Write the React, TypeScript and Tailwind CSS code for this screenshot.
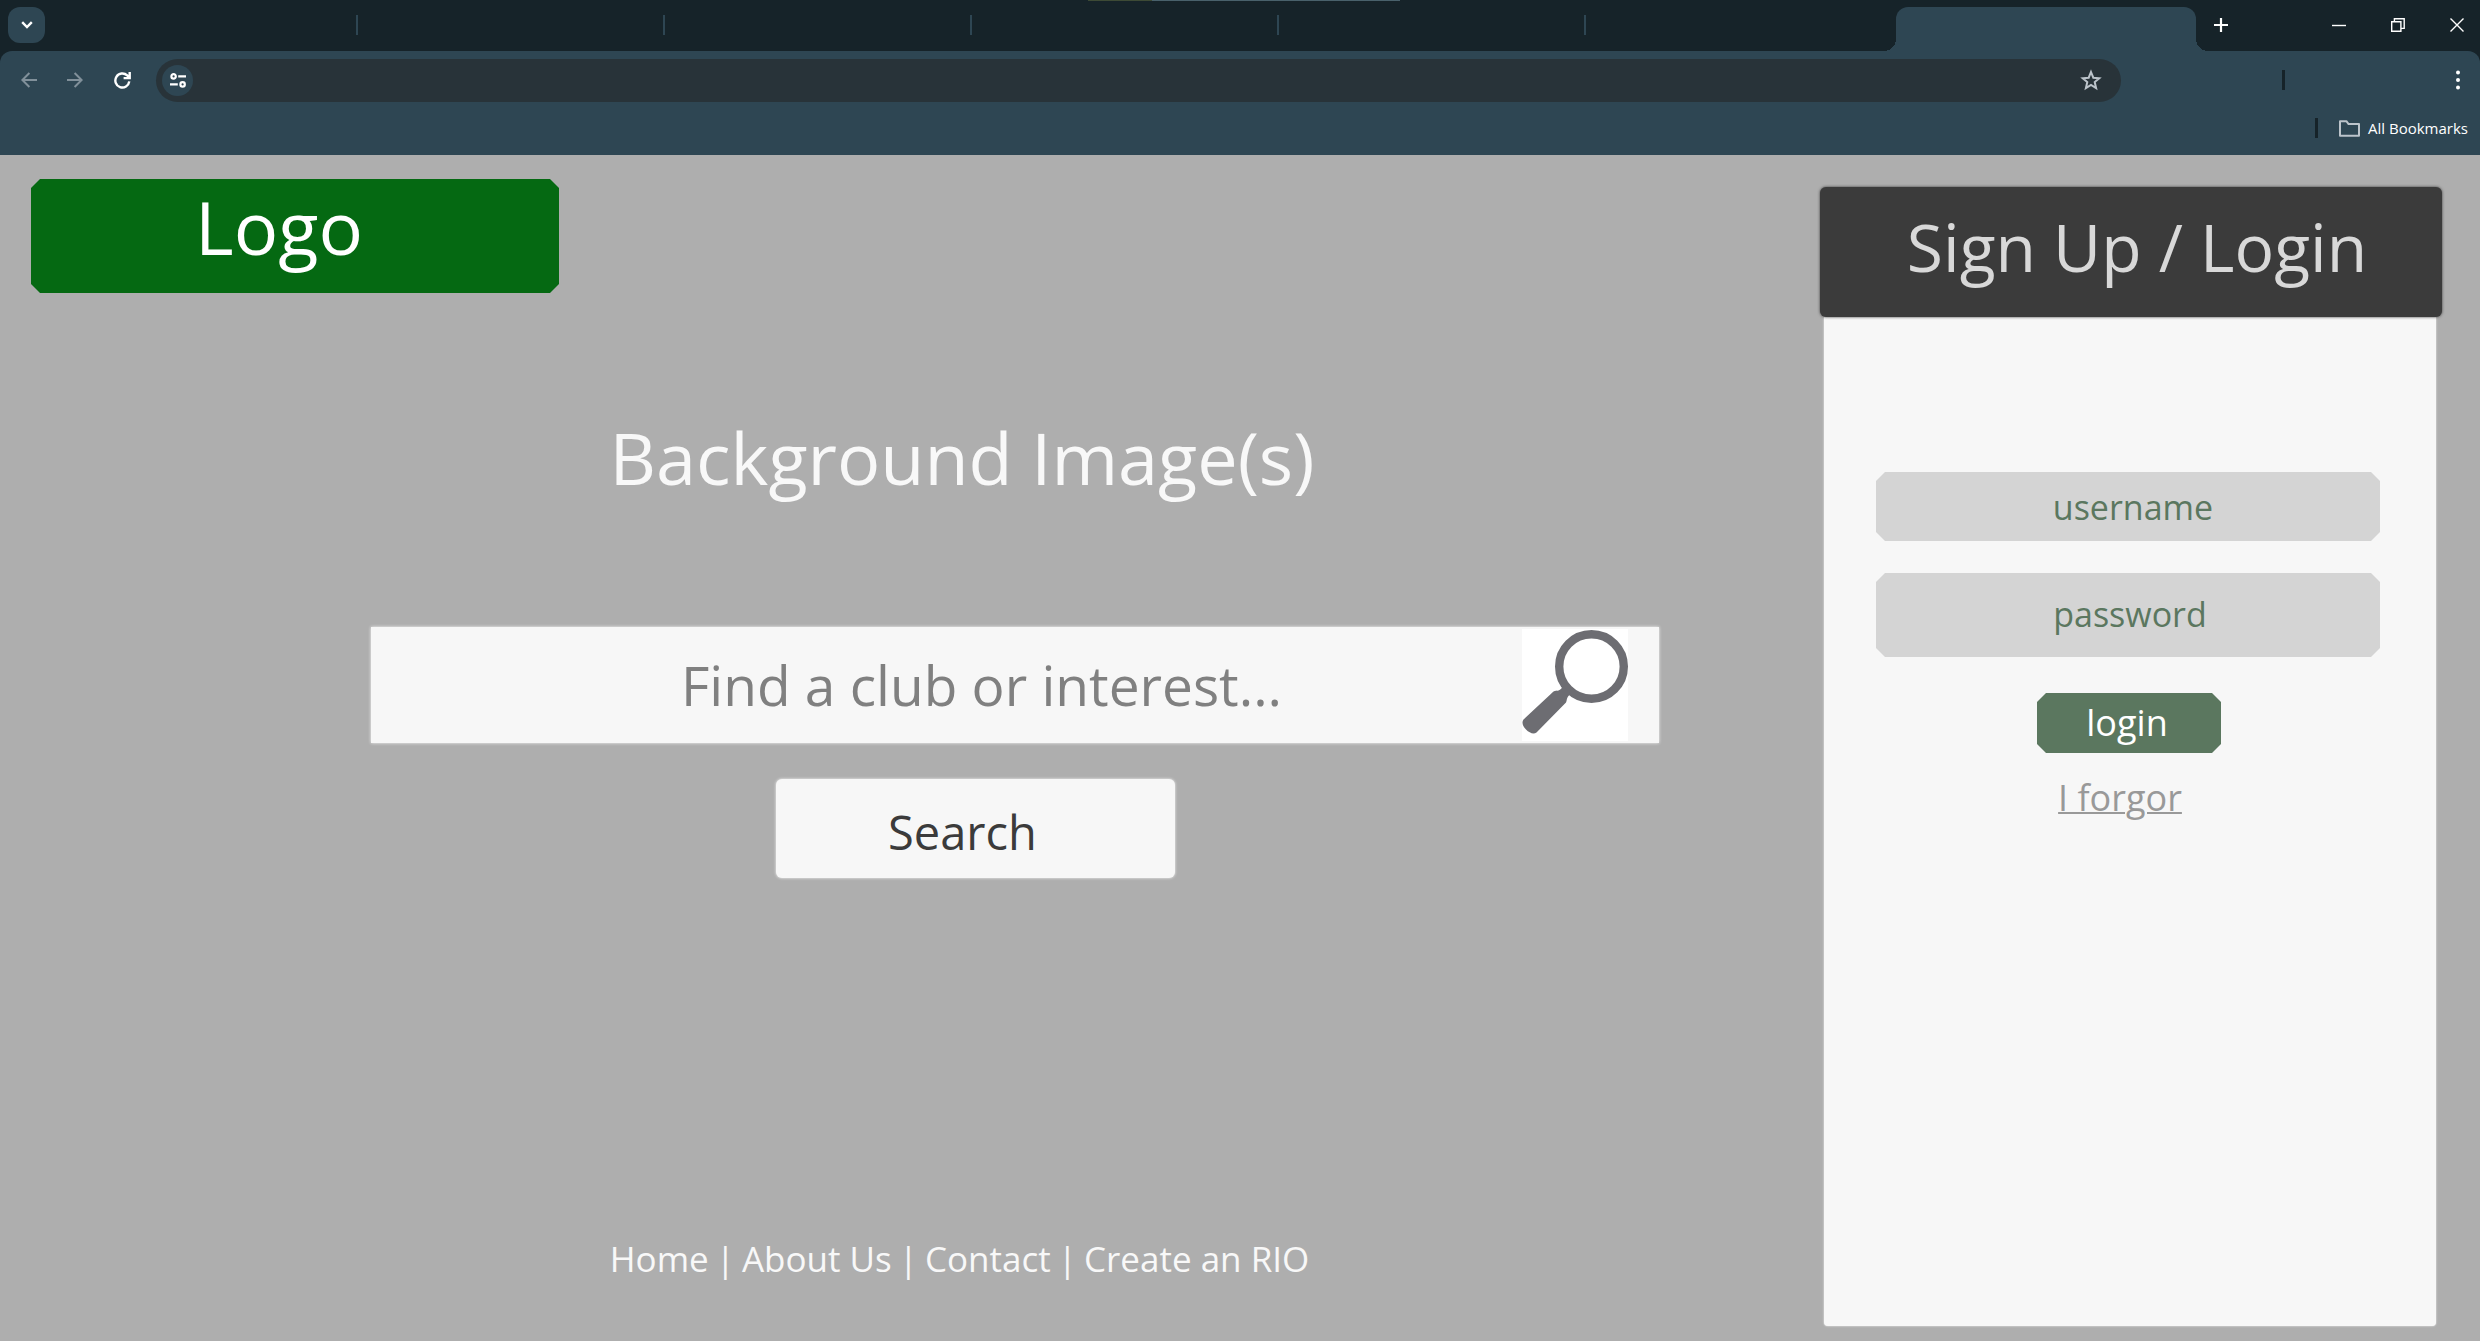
import type { ReactNode } from "react";

const chamfer =
  "[clip-path:polygon(9px_0,calc(100%-9px)_0,100%_9px,100%_calc(100%-9px),calc(100%-9px)_100%,9px_100%,0_calc(100%-9px),0_9px)]";

function IconButton({ label, className, children }: { label: string; className: string; children: ReactNode }) {
  return (
    <button type="button" aria-label={label} className={`flex shrink-0 items-center justify-center ${className}`}>
      {children}
    </button>
  );
}

function TabStrip() {
  return (
    <div className="relative flex h-[51px] items-stretch bg-[#162329]">
      <div className="absolute left-[1088px] top-0 flex h-px w-[312px] bg-[#49616b]">
        <div className="w-16 bg-[#3d4a35]" />
      </div>
      <div className="flex w-[51px] shrink-0 items-center pb-px pl-2">
        <IconButton label="Search tabs" className="h-9 w-[37px] rounded-xl bg-[#2e4653] text-white">
          <svg width="12" height="8" viewBox="0 0 12 8" fill="none" stroke="currentColor" strokeWidth="2.4">
            <path d="M1.2 1.2 6 6 10.8 1.2" />
          </svg>
        </IconButton>
      </div>
      <div className="flex w-[1845px] shrink items-center pb-px">
        {["one", "two", "three", "four", "five"].map((tab) => (
          <div key={tab} className="flex h-5 w-[307px] shrink justify-end border-r-2 border-[#2e4653]" />
        ))}
      </div>
      <div className="relative mt-[7px] w-[300px] shrink rounded-t-xl bg-[#2e4653]">
        <div className="absolute bottom-0 right-full h-3 w-3 bg-[radial-gradient(circle_at_0_0,#162329_12px,#2e4653_12px)]" />
        <div className="absolute bottom-0 left-full h-3 w-3 bg-[radial-gradient(circle_at_100%_0,#162329_12px,#2e4653_12px)]" />
      </div>
      <div className="flex grow items-center justify-between pb-px pl-[11px] text-white">
        <IconButton label="New tab" className="h-9 w-[28px]">
          <svg width="14" height="14" viewBox="0 0 14 14" stroke="currentColor" strokeWidth="2.2">
            <path d="M7 0v14M0 7h14" />
          </svg>
        </IconButton>
        <div className="flex gap-[13px]">
          <IconButton label="Minimize" className="h-9 w-[46px]">
            <svg width="14" height="14" viewBox="0 0 14 14" stroke="currentColor" strokeWidth="1.4">
              <path d="M0 7.5h14" />
            </svg>
          </IconButton>
          <IconButton label="Restore" className="h-9 w-[46px]">
            <svg width="14" height="14" viewBox="0 0 14 14" fill="none" stroke="currentColor" strokeWidth="1.4">
              <path d="M.7 3.700h9.200v9.600H.7zM3.400 3.700V.8h9.800v9.600H9.900" />
            </svg>
          </IconButton>
          <IconButton label="Close" className="h-9 w-[46px]">
            <svg width="14" height="14" viewBox="0 0 14 14" stroke="currentColor" strokeWidth="1.4">
              <path d="M.5.5l13 13M13.5.5l-13 13" />
            </svg>
          </IconButton>
        </div>
      </div>
    </div>
  );
}

function Toolbar() {
  return (
    <div className="flex h-[59px] items-center pb-px">
      <div className="flex w-[156px] shrink-0 items-center pl-[6px]">
        <IconButton label="Back" className="h-9 w-[46px] text-[#81909a]">
          <svg width="16" height="16" viewBox="0 0 16 16" fill="none" stroke="currentColor" strokeWidth="2">
            <path d="M16 8H1.6M8.4 1 1.4 8l7 7" />
          </svg>
        </IconButton>
        <IconButton label="Forward" className="h-9 w-[46px] text-[#81909a]">
          <svg width="16" height="16" viewBox="0 0 16 16" fill="none" stroke="currentColor" strokeWidth="2">
            <path d="M0 8h14.4M7.6 1l7 7-7 7" />
          </svg>
        </IconButton>
        <IconButton label="Reload" className="h-9 w-[48px] text-white">
          <svg width="17" height="17" viewBox="0 0 17 17" fill="none" stroke="currentColor" strokeWidth="2.4">
            <path d="M15.3 9.400A7 7 0 1 1 13.200 3.400l1.900 1.900M15.700 0v6.100H9.600" />
          </svg>
        </IconButton>
      </div>
      <div className="flex h-[43px] w-[1965px] shrink items-center rounded-full bg-[#283339] pl-[6px] pr-[18px]">
        <IconButton label="Site information" className="h-[31px] w-[31px] rounded-full bg-[#2e4653] text-white">
          <svg width="16" height="15" viewBox="0 0 16 15" fill="none" stroke="currentColor" strokeWidth="2.2">
            <circle cx="3.6" cy="3.4" r="2.2" />
            <path d="M8.2 3.4H16M0 11.4h7.8" />
            <circle cx="12.6" cy="11.4" r="2.2" />
          </svg>
        </IconButton>
        <input aria-label="Address" className="h-full min-w-0 grow bg-transparent px-3 text-base text-white outline-none" />
        <IconButton label="Bookmark this tab" className="h-6 w-6 text-[#bcc4cb]">
          <svg width="22" height="22" viewBox="0 0 22 22" fill="none" stroke="currentColor" strokeWidth="2">
            <path d="M11 3l2.300 5.700 6 .5-4.600 3.900 1.400 6L11 15.900l-5.100 3.200 1.400-6L2.700 9.200l6-.5z" />
          </svg>
        </IconButton>
      </div>
      <div className="flex grow items-center justify-between pl-[161px]">
        <div className="h-5 w-[3px] bg-[#162329]" />
        <IconButton label="Menu" className="h-9 w-[44px] text-white">
          <svg width="4" height="20" viewBox="0 0 4 20" fill="currentColor">
            <circle cx="2" cy="2.6" r="2" />
            <circle cx="2" cy="10" r="2" />
            <circle cx="2" cy="17.4" r="2" />
          </svg>
        </IconButton>
      </div>
    </div>
  );
}

function BookmarksBar() {
  return (
    <div className="flex h-[45px] items-start justify-end pr-3 pt-[6px]">
      <div className="flex h-6 items-center">
        <div className="mr-[21px] h-5 w-[3px] bg-[#162329]" />
        <button type="button" className="flex items-center gap-2 text-[15px] leading-6 text-white">
          <svg width="21" height="17" viewBox="0 0 21 17" fill="none" stroke="#bcc4cb" strokeWidth="2" strokeLinejoin="round">
            <path d="M1 15.800V1.200h6.400l2.200 2.900H20v11.700z" />
          </svg>
          All Bookmarks
        </button>
      </div>
    </div>
  );
}

function MagnifierIcon() {
  return (
    <svg width="106" height="106" viewBox="0 0 106 106" aria-hidden="true">
      <circle cx="69.500" cy="37.500" r="32.300" fill="none" stroke="#6d6d72" strokeWidth="8.400" />
      <path
        fill="#6d6d72"
        d="M41 57l8.500 8.500c-2 0-3.500 1.500-4 3-1 1.500-.5 3-1.500 5L14.500 103.500c-3 2-7 .5-10.500-3-3.500-3.500-4.500-7.500-2.500-10L31.500 62.500c1.500-1 3.500-.5 5-1 2-.5 3.500-2.500 4.500-4.500z"
      />
    </svg>
  );
}

function Hero() {
  return (
    <section className="flex min-w-0 grow flex-col pt-6">
      <a
        href="#home"
        className={`ml-[31px] flex h-[114px] w-[528px] items-center justify-center bg-[#056912] pb-[18px] pr-8 text-[74px] leading-none text-white ${chamfer}`}
      >
        Logo
      </a>
      <h1 className="mt-28 pl-[104px] text-center text-[72px] leading-[104px] text-[#f8f8f8]">Background Image(s)</h1>
      <form className="flex flex-col" onSubmit={(event) => event.preventDefault()}>
        <div className="ml-[371px] mr-[161px] mt-[118px] flex h-[116px] items-center bg-[#f7f7f7] pr-[31px] shadow-[0_0_3px_#f7f7f7]">
          <input
            aria-label="Find a club or interest"
            placeholder="Find a club or interest..."
            className="h-full min-w-0 grow bg-transparent pb-[2px] pl-[70px] text-center text-[55px] text-[#808080] outline-none placeholder:text-[#808080]"
          />
          <div className="flex h-[112px] shrink-0 items-start bg-white">
            <MagnifierIcon />
          </div>
        </div>
        <div className="mt-9 flex justify-center pl-[131px]">
          <button
            type="submit"
            className="h-[99px] w-[399px] rounded-md bg-[#f7f7f7] pr-[26px] pt-2 text-[47px] leading-none text-[#3b3b3b] shadow-[0_0_3px_#f7f7f7]"
          >
            Search
          </button>
        </div>
      </form>
      <nav className="mb-[57px] mt-auto flex justify-center gap-[7px] pl-[99px] text-[35px] leading-[50px] text-[#f8f8f8]">
        <a href="#home">Home</a>
        <span>|</span>
        <a href="#about">About Us</a>
        <span>|</span>
        <a href="#contact">Contact</a>
        <span>|</span>
        <a href="#create">Create an RIO</a>
      </nav>
    </section>
  );
}

function LoginPanel() {
  return (
    <aside className="mb-[15px] mr-[38px] mt-8 flex w-[622px] shrink-0 flex-col items-center">
      <h2 className="z-10 flex h-[130px] w-full items-center justify-center rounded-md bg-[#3b3b3b] pb-3 pl-[12px] text-[66px] leading-none text-[#d8d8d8] shadow-[0_0_3px_#3b3b3b]">
        Sign Up / Login
      </h2>
      <form
        className="mr-[2px] flex w-[612px] grow flex-col items-center rounded-b bg-[#f7f7f7] pr-1 pt-[155px] text-[36px] shadow-[0_0_2px_#f7f7f7]"
        onSubmit={(event) => event.preventDefault()}
      >
        <input
          aria-label="username"
          placeholder="username"
          className={`h-[69px] w-[504px] bg-[#d4d4d4] pl-[10px] text-center text-[34px] text-[#5b775f] outline-none placeholder:text-[#5b775f] ${chamfer}`}
        />
        <input
          type="password"
          aria-label="password"
          placeholder="password"
          className={`mt-8 h-[84px] w-[504px] bg-[#d4d4d4] pb-[2px] pl-1 text-center text-[34px] text-[#5b775f] outline-none placeholder:text-[#5b775f] ${chamfer}`}
        />
        <button
          type="submit"
          className={`ml-[2px] mt-9 h-[60px] w-[184px] bg-[#5b775f] pr-1 leading-none text-white ${chamfer}`}
        >
          login
        </button>
        <a href="#reset" className="mt-5 pr-4 leading-[50px] text-[#999999] underline decoration-2">
          I forgor
        </a>
      </form>
    </aside>
  );
}

export default function App() {
  return (
    <div className="flex min-h-screen flex-col bg-[#aeaeae] font-['Open_Sans','Noto_Sans',sans-serif]">
      <header className="bg-[#162329]">
        <TabStrip />
        <div className="rounded-t-xl bg-[#2e4653]">
          <Toolbar />
          <BookmarksBar />
        </div>
      </header>
      <main className="flex grow">
        <Hero />
        <LoginPanel />
      </main>
    </div>
  );
}
